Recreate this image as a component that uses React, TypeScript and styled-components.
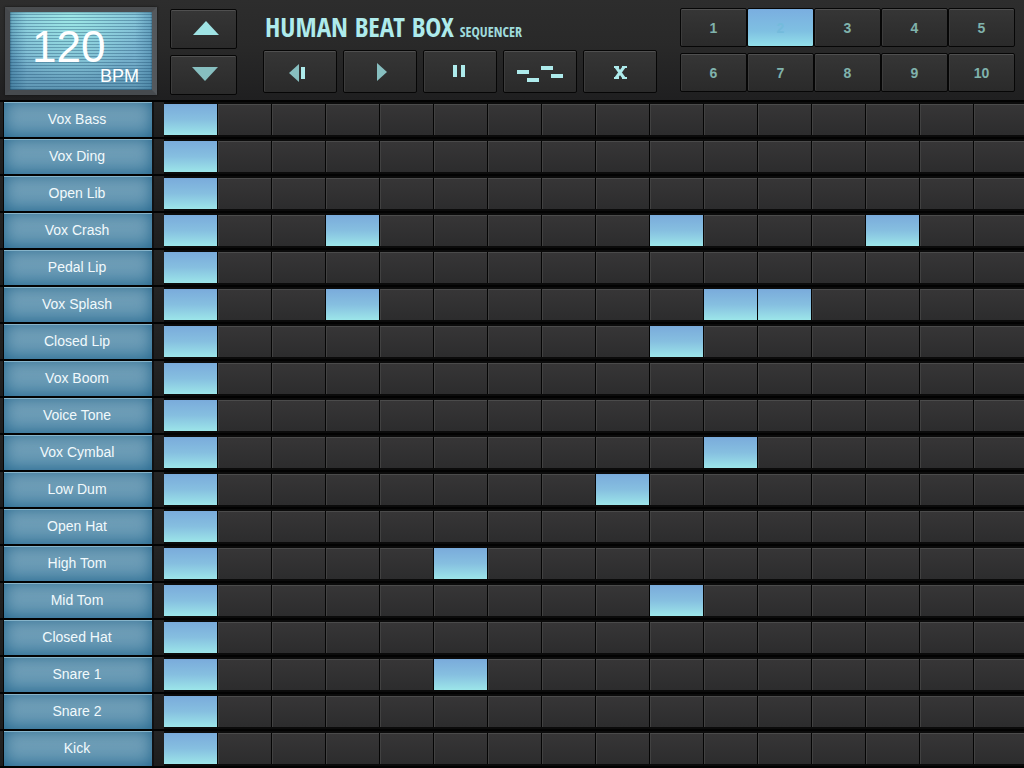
import React, { useState } from "react";
import styled, { createGlobalStyle } from "styled-components";

const GlobalStyle = createGlobalStyle`
  * { box-sizing: border-box; }
  body {
    margin: 0;
    background: #1c1c1c;
    font-family: "Liberation Sans", Arial, Helvetica, sans-serif;
    overflow-x: hidden;
  }
  button { font: inherit; padding: 0; margin: 0; cursor: pointer; }
`;

const Page = styled.main`
  width: 100%;
  overflow: hidden;
`;

const Header = styled.header`
  display: flex;
  align-items: flex-start;
  height: 100px;
  padding: 7px 9px 0 5px;
  background: linear-gradient(#2d2d2d, #292929 45%, #1f1f20);
`;

const Display = styled.output`
  display: flex;
  flex-direction: column;
  flex: none;
  width: 152px;
  height: 88px;
  margin-right: 13px;
  padding: 15px 13px 0 22px;
  border: 5px solid;
  border-color: #4a4d50 #54585c #474b4f #45484c;
  color: #fff;
  background:
    repeating-linear-gradient(transparent 0 2px, rgba(24, 70, 104, 0.36) 2px 3px),
    radial-gradient(ellipse at 42% 0%, rgba(160, 236, 232, 0.95), transparent 65%),
    linear-gradient(90deg, rgba(30, 90, 130, 0.4), transparent 12% 88%, rgba(30, 90, 130, 0.3)),
    linear-gradient(#86c4da, #79b3cf 55%, #5f97b4);
  box-shadow: inset 0 0 2px #16384c, 0 0 2px #111;
`;

const Tempo = styled.span`
  font-size: 44px;
  line-height: 40px;
`;

const Unit = styled.span`
  align-self: flex-end;
  font-size: 18px;
  line-height: 18px;
`;

const Key = styled.button`
  display: flex;
  align-items: center;
  justify-content: center;
  border: 1px solid #060606;
  border-radius: 2px;
  background: linear-gradient(#363636, #2a2a2a);
  box-shadow: inset 0 1px 0 #505050, inset 1px 0 0 #3c3c3c;
`;

const Stepper = styled.div`
  display: flex;
  flex-direction: column;
  gap: 6px;
  flex: none;
  margin-top: 2px;
`;

const StepKey = styled(Key)`
  width: 67px;
  height: 40px;
`;

const Center = styled.div`
  flex: none;
  margin-left: 26px;
`;

const Title = styled.h1`
  display: flex;
  align-items: baseline;
  gap: 6px;
  height: 43px;
  margin: 0;
  padding-left: 2px;
  font-family: "Noto Sans ExtraCondensed", "Open Sans Condensed", "Roboto Condensed", "Liberation Sans", sans-serif;
  font-size: 27px;
  line-height: 40px;
  font-weight: 700;
  white-space: nowrap;
  color: #aeebec;
`;

const Subtitle = styled.span`
  font-size: 14px;
  color: #9fdbdc;
`;

const Transport = styled.div`
  display: flex;
  gap: 6px;
`;

const TransportKey = styled(Key)`
  width: 74px;
  height: 43px;
`;

const Patterns = styled.div`
  display: grid;
  grid-template-columns: repeat(5, 67px);
  grid-auto-rows: 39px;
  row-gap: 6px;
  margin: 1px 0 0 auto;
`;

const PatternKey = styled(Key)<{ $on: boolean }>`
  font-size: 14px;
  font-weight: 700;
  color: ${(p) => (p.$on ? "#74bbdc" : "#80b3ac")};
  ${(p) => p.$on && `
    background: linear-gradient(#7aaee0, #7fc0e2 60%, #93e0ea);
    box-shadow: none;
  `}
`;

const Tracks = styled.section`
  border-top: 2px solid #020202;
`;

const Track = styled.div`
  display: grid;
  grid-template-columns: 148px minmax(0, 1fr);
  column-gap: 12px;
  height: 37px;
  padding-left: 4px;
  border-bottom: 2px solid #020202;
  background: linear-gradient(#242424, #1d1d1d);
`;

const TrackName = styled.div`
  color: #f1f9fc;
  font-size: 14px;
  line-height: 35px;
  text-align: center;
  padding-right: 2px;
  background: linear-gradient(#7aa5bc, #6c9cb6 50%, #5f94b1);
  box-shadow: -1px 0 0 #050505, 2px 0 0 #101113, inset 0 1px 0 #86b4ca,
    inset 0 0 16px #23658c;
`;

const Steps = styled.div`
  display: grid;
  grid-template-columns: repeat(16, minmax(54px, 1fr));
  height: 35px;
  padding: 2px 0;
  background: #0b0b0b;
`;

const Step = styled.button<{ $on: boolean }>`
  border: 0;
  border-right: 1px solid #040404;
  background: ${(p) =>
    p.$on ? "linear-gradient(#7aabdb, #86bfe0 50%, #9ce5e9)" : "linear-gradient(#373637, #2c2c2d)"};
  box-shadow: ${(p) => (p.$on ? "none" : "inset 0 1px 0 #4b4b4b, inset 1px 0 0 #414141")};
`;

const tracks: [string, number[]][] = [
  ["Vox Bass", [0]],
  ["Vox Ding", [0]],
  ["Open Lib", [0]],
  ["Vox Crash", [0, 3, 9, 13]],
  ["Pedal Lip", [0]],
  ["Vox Splash", [0, 3, 10, 11]],
  ["Closed Lip", [0, 9]],
  ["Vox Boom", [0]],
  ["Voice Tone", [0]],
  ["Vox Cymbal", [0, 10]],
  ["Low Dum", [0, 8]],
  ["Open Hat", [0]],
  ["High Tom", [0, 5]],
  ["Mid Tom", [0, 9]],
  ["Closed Hat", [0]],
  ["Snare 1", [0, 5]],
  ["Snare 2", [0]],
  ["Kick", [0]],
];

const transport = [
  {
    label: "Rewind",
    art: (
      <>
        <path d="M11 5v18L1 14z" fill="#87bfc0" />
        <path d="M13 8h4v12h-4z" fill="#aeebec" />
      </>
    ),
  },
  { label: "Play", art: <path d="M9 4v18l10-9z" fill="#87bfc0" /> },
  { label: "Pause", art: <path d="M5 6h4v12H5zM13 6h4v12h-4z" fill="#aeebec" /> },
  {
    label: "Random",
    art: <path d="M-11 11H1v4h-12zM-1 19h12v4H-1zM13 7h12v4H13zM23 15h12v4H23z" fill="#aeebec" />,
  },
  {
    label: "Clear",
    art: (
      <>
        <path d="M8 8l8 11M16 8L8 19" fill="none" stroke="#aeebec" strokeWidth="3" />
        <path d="M6 7h5v2H6zM14 7h5v2h-5zM6 18h5v2H6zM14 18h5v2h-5z" fill="#aeebec" />
      </>
    ),
  },
];

const Glyph = styled.svg`
  width: 24px;
  height: 26px;
  overflow: visible;
`;

export default function App() {
  const [bpm, setBpm] = useState(120);
  const [pattern, setPattern] = useState(2);
  const [grid, setGrid] = useState(tracks.map(([, on]) => on));

  const toggle = (row: number, step: number) =>
    setGrid(
      grid.map((on, r) =>
        r !== row ? on : on.includes(step) ? on.filter((s) => s !== step) : [...on, step]
      )
    );

  return (
    <Page>
      <GlobalStyle />
      <Header>
        <Display>
          <Tempo>{bpm}</Tempo>
          <Unit>BPM</Unit>
        </Display>
        <Stepper>
          <StepKey aria-label="Faster" onClick={() => setBpm(bpm + 1)}>
            <Glyph viewBox="0 0 24 26">
              <path d="M14 5l13 14H1z" fill="#9fe3e4" />
            </Glyph>
          </StepKey>
          <StepKey aria-label="Slower" onClick={() => setBpm(bpm - 1)}>
            <Glyph viewBox="0 0 24 26">
              <path d="M0 5h26L13 19z" fill="#87bfc0" />
            </Glyph>
          </StepKey>
        </Stepper>
        <Center>
          <Title>
            HUMAN BEAT BOX <Subtitle>SEQUENCER</Subtitle>
          </Title>
          <Transport>
            {transport.map((t) => (
              <TransportKey key={t.label} aria-label={t.label}>
                <Glyph viewBox="0 0 24 26">{t.art}</Glyph>
              </TransportKey>
            ))}
          </Transport>
        </Center>
        <Patterns>
          {Array.from({ length: 10 }, (_, i) => i + 1).map((n) => (
            <PatternKey key={n} $on={n === pattern} aria-pressed={n === pattern} onClick={() => setPattern(n)}>
              {n}
            </PatternKey>
          ))}
        </Patterns>
      </Header>
      <Tracks>
        {tracks.map(([name], row) => (
          <Track key={name}>
            <TrackName>{name}</TrackName>
            <Steps>
              {Array.from({ length: 16 }, (_, step) => (
                <Step
                  key={step}
                  $on={grid[row].includes(step)}
                  aria-pressed={grid[row].includes(step)}
                  aria-label={`${name}, step ${step + 1}`}
                  onClick={() => toggle(row, step)}
                />
              ))}
            </Steps>
          </Track>
        ))}
      </Tracks>
    </Page>
  );
}
